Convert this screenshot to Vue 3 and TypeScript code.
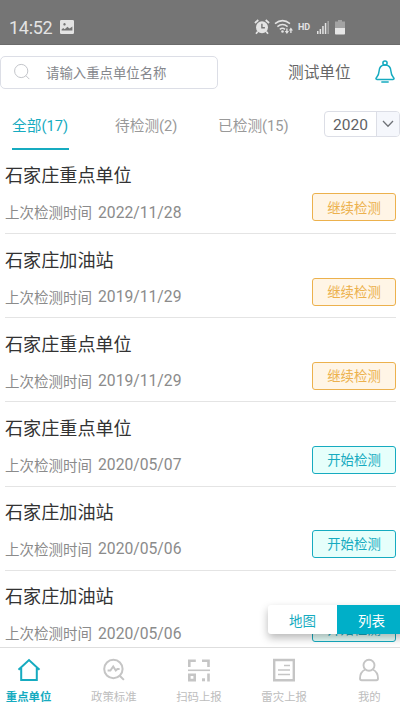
<script setup lang="ts">
import { ref } from 'vue'

interface Unit {
  name: string
  date: string
  started: boolean
}

const units: Unit[] = [
  { name: '石家庄重点单位', date: '2022/11/28', started: true },
  { name: '石家庄加油站', date: '2019/11/29', started: true },
  { name: '石家庄重点单位', date: '2019/11/29', started: true },
  { name: '石家庄重点单位', date: '2020/05/07', started: false },
  { name: '石家庄加油站', date: '2020/05/06', started: false },
  { name: '石家庄加油站', date: '2020/05/06', started: false },
]
const tabs = ['全部(17)', '待检测(2)', '已检测(15)']
const activeTab = ref(0)
const listMode = ref(true)
</script>

<template>
  <div class="screen">
    <header class="status">
      <span class="clock">14:52</span>
      <svg class="photo" width="14" height="14" viewBox="0 0 14 14">
        <path fill="#e3e3e3" fill-rule="evenodd" d="M1.3 0h11.4Q14 0 14 1.3v11.4q0 1.3-1.3 1.3H1.3Q0 14 0 12.700V1.300Q0 0 1.300 0ZM1.600 10.500h10.800V6.500L9.500 8.600 7.400 6.700 4.700 9.200 3.200 8 1.600 9.400ZM4.500 3.100a1.200 1.200 0 1 0 .01 0Z" />
      </svg>
      <div class="signals">
        <svg width="16" height="16" viewBox="0 0 16 16" fill="none" stroke="#e3e3e3">
          <circle cx="8" cy="8.300" r="6" fill="#e3e3e3" stroke="none" />
          <path stroke-width="1.700" d="M.9 4 4.300 1M15.100 4 11.700 1M3.800 12.500 2 14.800M12.200 12.500 14 14.800" />
          <path stroke="#757575" stroke-width="1.400" d="M7.900 4.800v4h3" />
        </svg>
        <svg class="wifi" width="20" height="16" viewBox="0 0 20 16" fill="none" stroke="#e3e3e3" stroke-width="1.500">
          <path d="M1 4.700Q8.500-1.500 16 4.700M3.400 7.600Q8.500 3.400 13.600 7.600M5.800 10.300Q8.500 8.300 11 10.300" />
          <circle cx="8.500" cy="12.500" r="1.300" fill="#e3e3e3" stroke="none" />
          <path stroke-width="1.300" d="M12.900 9.500v4M16.900 14v-4" />
          <path fill="#e3e3e3" stroke="none" d="M10.800 12h4.200l-2.100 3ZM14.800 11.500H19l-2.100-3Z" />
        </svg>
        <span class="hd">HD</span>
        <svg class="bars" width="13" height="14" viewBox="0 0 13 14">
          <path fill="#e3e3e3" d="M0 11h1.500v3H0ZM2.600 9h1.500v5H2.600ZM5.200 6h1.500v8H5.200ZM7.800 3h1.500v11H7.800Z" />
          <path fill="#a3a3a3" d="M10.400 1H12v13h-1.600Z" />
        </svg>
        <svg class="battery" width="10" height="15" viewBox="0 0 10 15">
          <path fill="#a3a3a3" d="M3 0h4v1.500h3V8H0V1.500h3Z" />
          <path fill="#e6e6e6" d="M0 8h10v5.700q0 .8-.8.8H.8q-.8 0-.8-.8Z" />
        </svg>
      </div>
    </header>

    <div class="topbar">
      <div class="search">
        <svg width="17" height="17" viewBox="0 0 17 17" fill="none" stroke="#c3c5ca" stroke-width="1">
          <circle cx="7.200" cy="7" r="6.600" /><path d="m11.800 11.600 3.500 3.500" />
        </svg>
        <span>请输入重点单位名称</span>
      </div>
      <span class="org">测试单位</span>
      <svg class="bell" width="20" height="24" viewBox="0 0 20 24" fill="none" stroke="#16abc0" stroke-width="1.500" stroke-linejoin="round">
        <circle cx="10" cy="3" r="2.100" />
        <path d="M10 5.100C6.400 5.100 4.200 7.300 4 11.500 3.900 15 2.500 16.200 1.200 17.900Q.4 19.300 2 19.400h16q1.600-.1.800-1.500C17.500 16.200 16.100 15 16 11.500 15.800 7.300 13.600 5.100 10 5.100ZM6.300 22.100h7.400" />
      </svg>
    </div>

    <div class="filters">
      <button v-for="(tab, i) in tabs" :key="tab" class="tab" :class="{ active: activeTab === i }" @click="activeTab = i">{{ tab }}</button>
      <div class="year">
        <span>2020</span>
        <i><svg width="12" height="8" viewBox="0 0 12 8" fill="none" stroke="#707378" stroke-width="1.300"><path d="m1 1 5 5.200L11 1" /></svg></i>
      </div>
    </div>

    <main class="list">
      <article v-for="(unit, i) in units" :key="i" class="unit">
        <h2>{{ unit.name }}</h2>
        <div class="detail">
          <span class="label">上次检测时间</span>
          <span class="date">{{ unit.date }}</span>
          <button class="action" :class="{ started: unit.started }">{{ unit.started ? '继续检测' : '开始检测' }}</button>
        </div>
      </article>
    </main>

    <div class="mode">
      <button :class="{ on: !listMode }" @click="listMode = false">地图</button>
      <button :class="{ on: listMode }" @click="listMode = true">列表</button>
    </div>

    <nav class="nav">
      <a class="current">
        <svg width="24" height="24" viewBox="0 0 24 24" fill="none" stroke="#16abc0" stroke-width="2"><path d="M1.500 11.800 12 2l10.500 9.800M4.200 10v12h15.600V10" /></svg>
        <span>重点单位</span>
      </a>
      <a>
        <svg width="24" height="24" viewBox="0 0 24 24" fill="none" stroke="#c5c5c5" stroke-width="2"><circle cx="11.400" cy="11" r="9.200" /><path d="m17.700 17.700 4.200 4.200M5.600 12.500h2.800l2.800-4 2.600 4 1.600-1.500h2.200" /></svg>
        <span>政策标准</span>
      </a>
      <a>
        <svg width="24" height="24" viewBox="0 0 24 24" fill="none" stroke="#c5c5c5" stroke-width="2.600"><path d="M2.300 9V2.800h6.500M15 2.800h6.500V9M2.300 16.700h5.400v5.400H2.300ZM21.500 15.400v8" /><path stroke-width="1.600" d="M1 12.300h22" /><path fill="#c5c5c5" stroke="none" d="M15 20.300h3v3h-3Z" /></svg>
        <span>扫码上报</span>
      </a>
      <a>
        <svg width="24" height="24" viewBox="0 0 24 24" fill="none" stroke="#c5c5c5" stroke-width="2.400"><path d="M2.200 2h19.600v20.300H2.200Z" /><path stroke-width="1.500" d="M12 7.600h6M6 12h12M6 16.600h12" /></svg>
        <span>雷灾上报</span>
      </a>
      <a>
        <svg width="24" height="24" viewBox="0 0 24 24" fill="none" stroke="#c5c5c5" stroke-width="1.900"><circle cx="12" cy="7.200" r="5.500" /><path d="M8.200 11.500C4.600 13.200 3 16.500 3 20.500Q3 22.200 4.700 22.200h14.600Q21 22.200 21 20.500c0-4-1.600-7.300-5.200-9" /></svg>
        <span>我的</span>
      </a>
    </nav>
  </div>
</template>

<style>
body { margin: 0; background: #fff; overflow: hidden; }
</style>

<style scoped>
* { box-sizing: border-box; }
.screen { position: relative; display: flex; flex-direction: column; width: 400px; height: 710px; overflow: hidden; background: #fff; font-family: Roboto, "Noto Sans CJK SC", sans-serif; white-space: nowrap; }
svg { display: block; flex: none; overflow: visible; }
button { font-family: inherit; padding: 0; border: 0; background: none; }
.status { flex: none; height: 45px; display: flex; align-items: flex-start; padding: 18px 55px 0 9px; background: #757575; border-bottom: 1px solid #6b6b6b; color: #e3e3e3; }
.clock { width: 51px; font-size: 18px; line-height: 20px; letter-spacing: -.3px; }
.photo { margin-top: 2px; }
.signals { display: flex; align-items: center; margin: 1px 0 0 auto; height: 16px; }
.wifi { margin-left: 4px; }
.hd { margin-left: 4px; width: 19px; font-size: 9px; font-weight: 700; line-height: 16px; }
.battery { margin-left: 5px; }
.topbar { flex: none; height: 53px; display: flex; align-items: center; }
.search { width: 218px; height: 33px; margin-top: 1px; padding-left: 13px; display: flex; align-items: center; border: 1px solid #dcdee6; border-radius: 5px; color: #85878c; font-size: 13.400px; }
.search span { margin-left: 15px; margin-top: -1px; }
.org { margin-left: 70px; width: 87px; font-size: 15.700px; color: #666; }
.filters { flex: none; height: 52px; display: flex; padding: 13px 0 0 12px; align-items: flex-start; }
.tab { height: 39px; width: 57px; padding-bottom: 8px; border-bottom: 2px solid transparent; font-size: 14.700px; line-height: 26px; color: #999; margin-right: 46px; text-align: left; }
.tab + .tab { width: 64px; margin-right: 39px; }
.tab.active { color: #16abc0; border-color: #16abc0; }
.year { margin-left: auto; width: 76px; height: 26px; display: flex; border: 1px solid #dcdee6; border-radius: 4px; overflow: hidden; color: #606266; }
.filters .tab:nth-child(3) { width: 72px; margin-right: 0; }
.year span { width: 51px; text-align: center; font-size: 15.500px; line-height: 26px; }
.year i { flex: 1; display: flex; align-items: center; justify-content: center; background: #f5f7fc; border-left: 1px solid #dcdee6; }
.list { flex: 1; min-height: 0; overflow: hidden; padding: 0 4px 0 5px; }
.unit { height: 84.150px; padding-top: 13.400px; border-bottom: 1px solid #e4e4e4; }
h2 { margin: 0; font-size: 18.100px; line-height: 26px; font-weight: 400; color: #333; }
.detail { display: flex; align-items: center; height: 28px; margin-top: 4px; color: #8b8b8b; }
.label { font-size: 14.500px; width: 93px; padding-top: 9px; }
.date { font-size: 15.700px; padding-top: 10px; }
.action { margin-left: auto; width: 84px; height: 28px; padding-top: 3px; border: 1px solid #16abc0; border-radius: 3px; background: #e6fffb; color: #16abc0; font-size: 13.400px; line-height: 22px; }
.action.started { border-color: #ecb14d; background: #fff5e6; color: #ecb14d; }
.mode { position: absolute; left: 268px; top: 605px; width: 138px; height: 29px; display: flex; background: #fff; border-radius: 3px; box-shadow: 0 4px 9px rgba(0, 0, 0, .28); }
.mode button { width: 69px; font-size: 13.500px; color: #16abc0; }
.mode .on { background: #00afc8; color: #fff; }
.nav { flex: none; height: 63px; display: grid; grid-template-columns: repeat(5, 85.200px); margin-left: -14px; border-top: 1px solid #dedede; background: #fff; position: relative; }
.nav a { display: flex; flex-direction: column; align-items: center; padding-top: 10px; color: #bdbdbd; font-size: 11.400px; line-height: 16px; }
.nav span { margin-top: 7px; }
.nav .current { color: #16abc0; font-weight: 700; }
</style>
